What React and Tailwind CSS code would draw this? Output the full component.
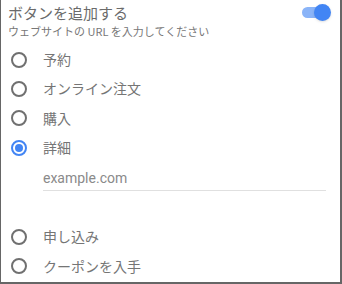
import React, { useState } from 'react';

const font = { fontFamily: '"Noto Sans CJK JP", "Noto Sans", Roboto, sans-serif' };

function Radio({ checked }) {
  return checked ? (
    <span className="w-[16px] h-[16px] rounded-full border-2 border-[#4285f4] flex items-center justify-center">
      <span className="w-[8px] h-[8px] rounded-full bg-[#4285f4]" />
    </span>
  ) : (
    <span className="w-[16px] h-[16px] rounded-full border-2 border-[#707070]" />
  );
}

function Row({ label, checked }) {
  return (
    <div className="flex items-center h-[29.3px] pl-[10px]">
      <Radio checked={checked} />
      <span className="ml-[16px] text-[14px] text-[#757575]">{label}</span>
    </div>
  );
}

export default function App() {
  const [on] = useState(true);

  return (
    <div style={font} className="w-[342px] h-[284px] bg-white border-l border-r-2 border-b-2 border-[#666] overflow-hidden">
      <div className="flex items-start justify-between pl-[7px] pr-[12px]">
        <div>
          <div className="text-[15px] leading-[20px] text-[#6b6b6b] mt-[3px]">ボタンを追加する</div>
          <div className="text-[11px] leading-[14px] text-[#777] mt-[1px]">ウェブサイトの URL を入力してください</div>
        </div>
        <div className="relative w-[26px] h-[11px] mt-[7px] rounded-full bg-[#8ab4f8]">
          {on && <span className="absolute right-[-3px] top-[-3px] w-[17px] h-[17px] rounded-full bg-[#4285f4] shadow" />}
        </div>
      </div>

      <div className="mt-[7px]">
        <Row label="予約" />
        <Row label="オンライン注文" />
        <Row label="購入" />
        <Row label="詳細" checked />
      </div>

      <div className="ml-[42px] mr-[14px] mt-[6px] border-b border-[#e0e0e0] pb-[2px]">
        <div className="text-[14px] leading-[20px] text-[#8a8a8a]" style={{ fontFamily: 'Roboto, sans-serif' }}>example.com</div>
      </div>

      <div className="mt-[31px]">
        <Row label="申し込み" />
        <Row label="クーポンを入手" />
      </div>
    </div>
  );
}
